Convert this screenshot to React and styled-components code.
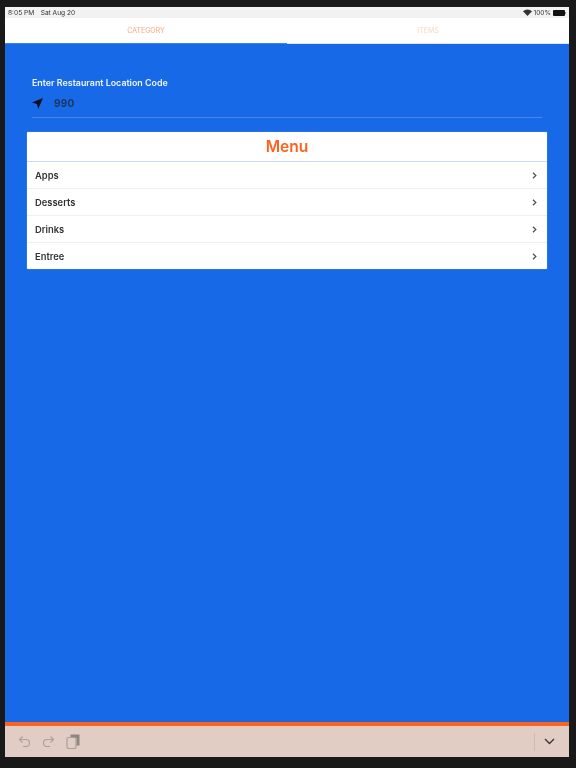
import React from 'react';
import styled, { createGlobalStyle } from 'styled-components';

const Global = createGlobalStyle`
  html, body { margin: 0; padding: 0; height: 100%; background: #191919; }
  body { font-family: Inter, "Liberation Sans", sans-serif; overflow: hidden; }
  * { box-sizing: border-box; }
`;
const Screen = styled.div`
  width: 564px; height: 750px; margin: 7px 0 0 5px;
  display: flex; flex-direction: column; background: #1769e8;
  filter: blur(0.45px);
`;
const StatusBar = styled.div`
  height: 11px; flex: none; background: #f2f2f2; display: flex; align-items: center;
  justify-content: space-between; padding: 0 3px 0 3px; font-size: 6.6px; color: #333;
`;
const StatusGroup = styled.div`display: flex; align-items: center; gap: ${p => p.$gap}px;`;
const Tabs = styled.div`height: 26px; flex: none; display: flex; background: #fff;`;
const Tab = styled.div`
  flex: 1; display: flex; align-items: center; justify-content: center;
  font-size: 7px; color: ${p => p.$active ? '#fda583' : '#fdd6c5'};
  border-bottom: 1px solid ${p => p.$active ? '#3f84ee' : '#dfe6f2'};
  padding-bottom: 1px;
`;
const Body = styled.div`flex: 1; display: flex; flex-direction: column; padding: 33px 22px 0;`;
const Field = styled.div`padding: 0 5px; margin-bottom: 14px;`;
const Label = styled.div`font-size: 8.9px; font-weight: 600; color: #eef4ff; line-height: 12px;`;
const InputRow = styled.div`
  display: flex; align-items: center; gap: 11px; height: 27px; margin-top: 2px;
  border-bottom: 1px solid #4a86e8; padding-bottom: 2px;
`;
const Value = styled.div`font-size: 10px; font-weight: 700; color: #1f3560; letter-spacing: .2px;`;
const Card = styled.div`background: #fff; border-radius: 1px; box-shadow: 0 0 1px #b9d4fa;`;
const CardTitle = styled.div`
  height: 30px; display: flex; align-items: center; justify-content: center;
  font-size: 15.6px; font-weight: 600; color: #fb6420; border-bottom: 1px solid #c6dcf7;
`;
const Row = styled.div`
  height: ${p => p.$last ? 26 : 27}px; display: flex; align-items: center; justify-content: space-between;
  padding: 0 10px 0 8px; font-size: 9.4px; font-weight: 600; color: #333;
  border-bottom: ${p => p.$last ? 'none' : '1px solid #efefef'};
`;
const Accent = styled.div`height: 4px; flex: none; background: #fb6420;`;
const Keyboard = styled.div`
  height: 31px; flex: none; background: #e2cdc5; display: flex; align-items: center;
  justify-content: space-between; padding: 0 14px 0 13px;
`;
const ToolGroup = styled.div`display: flex; align-items: center; gap: ${p => p.$gap}px;`;
const Divider = styled.div`width: 1px; height: 18px; background: #cdbcb5;`;

const Chevron = () => (
  <svg width="5" height="7" viewBox="0 0 5 7" fill="none" stroke="#555" strokeWidth="1.3">
    <path d="M1 .8 L3.8 3.5 L1 6.2" />
  </svg>
);
const Undo = ({ flip }) => (
  <svg width="13" height="13" viewBox="0 0 13 13" fill="none" stroke="#a9a09b" strokeWidth="1.1"
    style={flip ? { transform: 'scaleX(-1)' } : undefined}>
    <path d="M4.5 1.5 L1.5 4.5 L4.5 7.5 M1.5 4.5 H8 a3.2 3.2 0 0 1 0 7 H5" />
  </svg>
);

const items = ['Apps', 'Desserts', 'Drinks', 'Entree'];

export default function App() {
  return (
    <>
      <Global />
      <Screen>
        <StatusBar>
          <StatusGroup $gap={6.5}><span>8:05 PM</span><span>Sat Aug 20</span></StatusGroup>
          <StatusGroup $gap={2}>
            <svg width="9" height="7" viewBox="0 0 9 7"><path d="M0 2.2 A6.5 6.5 0 0 1 9 2.2 L4.5 7 Z" fill="#333" /></svg>
            <span>100%</span>
            <svg width="13" height="6" viewBox="0 0 13 6"><rect x="0" y="0" width="12" height="6" rx="1" fill="#111" /><rect x="12" y="2" width="1" height="2" fill="#888" /></svg>
          </StatusGroup>
        </StatusBar>
        <Tabs>
          <Tab $active>CATEGORY</Tab>
          <Tab>ITEMS</Tab>
        </Tabs>
        <Body>
          <Field>
            <Label>Enter Restaurant Location Code</Label>
            <InputRow>
              <svg width="11" height="11" viewBox="0 0 11 11"><path d="M11 0 L0 4.6 L5 6 L6.2 11 Z" fill="#0a0f1a" /></svg>
              <Value>990</Value>
            </InputRow>
          </Field>
          <Card>
            <CardTitle>Menu</CardTitle>
            {items.map((r, i) => (
              <Row key={r} $last={i === 3}>{r}<Chevron /></Row>
            ))}
          </Card>
        </Body>
        <Accent />
        <Keyboard>
          <ToolGroup $gap={11}>
            <Undo />
            <Undo flip />
            <svg width="14" height="15" viewBox="0 0 14 15">
              <path d="M4.5 .5 h9 v11 h-3 V4 H4.5 Z" fill="#8f8682" />
              <rect x="1" y="3.5" width="9" height="11" rx="1.8" fill="none" stroke="#a9a09b" strokeWidth="1.2" />
            </svg>
          </ToolGroup>
          <ToolGroup $gap={9}>
            <Divider />
            <svg width="11" height="7" viewBox="0 0 11 7" fill="none" stroke="#333" strokeWidth="1.3"><path d="M1 1 L5.5 5.5 L10 1" /></svg>
          </ToolGroup>
        </Keyboard>
      </Screen>
    </>
  );
}
